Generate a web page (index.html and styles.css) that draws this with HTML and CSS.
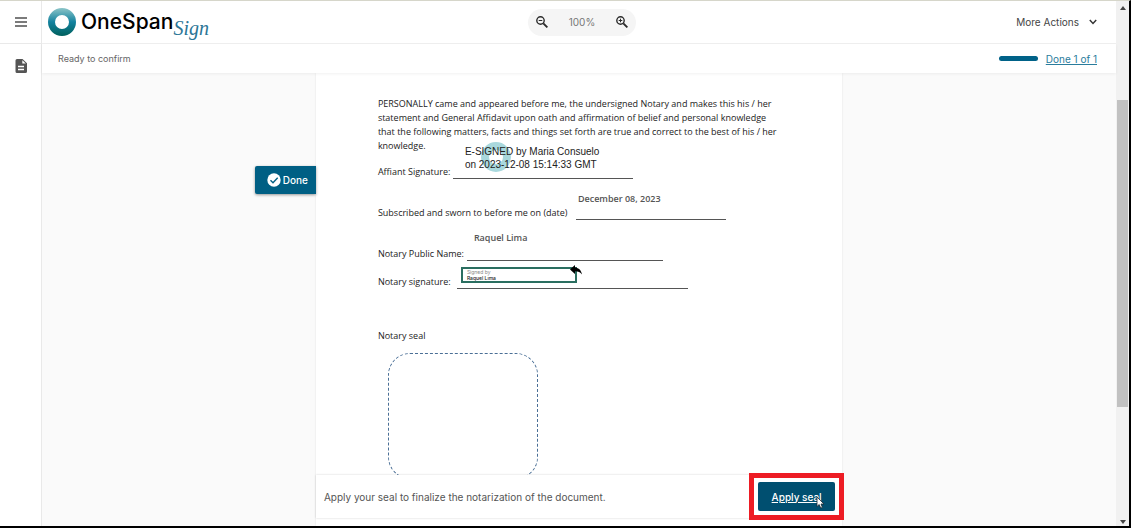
FILE: index.html
```html
<!DOCTYPE html>
<html lang="en">
<head>
<meta charset="utf-8">
<title>OneSpan Sign</title>
<link rel="stylesheet" href="styles.css">
</head>
<body>
<div class="screen">
  <nav class="rail">
    <button class="icon-button rail-menu" aria-label="Menu">
      <svg width="14" height="12" viewBox="0 0 14 12"><path d="M1 2h12M1 6h12M1 10h12" stroke="#505050" stroke-width="1.4"/></svg>
    </button>
    <button class="icon-button rail-doc" aria-label="Documents">
      <svg width="12" height="14" viewBox="0 0 12 14"><path d="M2 0h5.500L12 4.300V12.500a1.500 1.500 0 0 1-1.500 1.500H2A1.500 1.500 0 0 1 .5 12.500v-11A1.500 1.500 0 0 1 2 0z" fill="#555"/><path d="M7.300 1.200v3.400h3.500z" fill="#fff"/><path d="M3 7.500h6M3 10.500h6" stroke="#fff" stroke-width="1.300"/></svg>
    </button>
  </nav>
  <div class="main">
    <header class="topbar">
      <div class="logo">
        <svg width="28" height="28" viewBox="0 0 28 28">
          <defs><linearGradient id="ring" gradientUnits="userSpaceOnUse" x1="14" y1="0" x2="14" y2="28"><stop offset="0" stop-color="#8cc5c8"/><stop offset=".5" stop-color="#13829f"/><stop offset="1" stop-color="#00605c"/></linearGradient></defs>
          <circle cx="14" cy="14" r="10.500" fill="none" stroke="url(#ring)" stroke-width="7"/>
        </svg>
        <span class="logo-name">OneSpan</span><span class="logo-sign">Sign</span>
      </div>
      <div class="zoom">
        <button class="icon-button" aria-label="Zoom out">
          <svg width="12" height="12" viewBox="0 0 12 12" fill="none" stroke="#2c2c2c"><circle cx="4.500" cy="4.500" r="3.700" stroke-width="1.400"/><path d="M7.300 7.300l4.100 4.100" stroke-width="1.900"/><path d="M2.700 4.500h3.600"/></svg>
        </button>
        <span>100%</span>
        <button class="icon-button" aria-label="Zoom in">
          <svg width="12" height="12" viewBox="0 0 12 12" fill="none" stroke="#2c2c2c"><circle cx="4.500" cy="4.500" r="3.700" stroke-width="1.400"/><path d="M7.300 7.300l4.100 4.100" stroke-width="1.900"/><path d="M2.700 4.500h3.600M4.500 2.700v3.600"/></svg>
        </button>
      </div>
      <button class="more">More Actions
        <svg width="8" height="6" viewBox="0 0 8 6"><path d="M.8 1L4 4.400 7.200 1" fill="none" stroke="#333" stroke-width="1.500"/></svg>
      </button>
    </header>
    <div class="status">
      <span>Ready to confirm</span>
      <div class="status-progress">
        <span class="bar"></span>
        <a href="#">Done 1 of 1</a>
      </div>
    </div>
    <div class="workspace">
      <div class="column">
        <div class="page">
          <button class="done">
            <svg width="14" height="14" viewBox="0 0 14 14"><circle cx="7" cy="7" r="6.700" fill="#fff"/><path d="M3.500 7.200l2.500 2.500 4.700-5" fill="none" stroke="#005f84" stroke-width="1.400"/></svg>
            Done
          </button>
          <p class="statement">PERSONALLY came and appeared before me, the undersigned Notary and makes this his / her<br>statement and General Affidavit upon oath and affirmation of belief and personal knowledge<br>that the following matters, facts and things set forth are true and correct to the best of his / her<br>knowledge.</p>
          <div class="line affiant"><span>Affiant Signature:</span><i class="rule"></i></div>
          <div class="line sworn"><span>Subscribed and sworn to before me on (date)</span><i class="rule"></i></div>
          <div class="line notary"><span>Notary Public Name:</span><i class="rule"></i></div>
          <div class="line signature"><span>Notary signature:</span><i class="rule"></i></div>
          <p class="seal-label">Notary seal</p>
          <div class="seal"></div>

          <div class="esign"><span class="esign-ring"></span><span class="esign-text">E-SIGNED by Maria Consuelo<br>on 2023-12-08 15:14:33 GMT</span></div>
          <span class="field field-date">December 08, 2023</span>
          <span class="field field-name">Raquel Lima</span>
          <div class="signed">
            <span class="signed-by">Signed by</span>
            <span class="signed-name">Raquel Lima</span>
            <svg class="undo" width="12" height="10" viewBox="0 0 12 10"><path d="M5 0v2.600c4 .4 6.200 2.900 7 6.900-1.600-2.300-3.800-3.200-7-3.200V9L0 4.400z" fill="#000"/></svg>
          </div>
        </div>
        <footer class="action">
          <span>Apply your seal to finalize the notarization of the document.</span>
          <div class="highlight">
            <button class="apply">Apply seal</button>
            <svg class="cursor" width="9" height="13" viewBox="0 0 9 13"><path d="M1 1v9.500l2.200-2 1.500 3.600 1.700-.7L5 8h3z" fill="#fff" stroke="#1a2a33" stroke-width=".8"/></svg>
          </div>
        </footer>
      </div>
    </div>
  </div>
  <div class="scrollbar">
    <svg width="6" height="4" viewBox="0 0 6 4"><path d="M0 4l3-4 3 4z" fill="#444"/></svg>
    <div class="track"><div class="thumb"></div></div>
    <svg width="6" height="4" viewBox="0 0 6 4"><path d="M0 0l3 4 3-4z" fill="#444"/></svg>
  </div>
</div>
</body>
</html>
```
FILE: styles.css
```css
* { box-sizing: border-box; }

body {
  margin: 0;
  font-family: Inter, "Open Sans", sans-serif;
  font-size: 10px;
  color: #444;
}

button {
  font: inherit;
  color: inherit;
  border: 0;
  padding: 0;
  background: none;
}

svg { display: block; flex: none; }

p { margin: 0; }

.screen {
  display: flex;
  height: 100vh;
  background: #fff;
  border-top: 1px solid #d6d6ca;
  border-right: 2px solid #000;
  border-bottom: 2px solid #000;
}

.icon-button {
  display: flex;
  align-items: center;
  justify-content: center;
}

.rail {
  width: 42px;
  flex: none;
  border-right: 1px solid #e9e9e9;
}

.rail-menu {
  width: 100%;
  height: 43px;
  border-bottom: 1px solid #e9e9e9;
}

.rail-doc { width: 100%; height: 43px; }

.main {
  flex: 1;
  min-width: 0;
  display: flex;
  flex-direction: column;
}

.topbar {
  height: 43px;
  flex: none;
  display: grid;
  grid-template-columns: 1fr auto 1fr;
  align-items: center;
  padding-left: 6px;
  border-bottom: 1px solid #f0f0f0;
}

.logo { display: flex; align-items: center; }

.logo-name {
  margin-left: 5px;
  font-family: Inter, sans-serif;
  font-size: 21px;
  line-height: 28px;
  font-weight: 500;
  color: #000;
}

.logo-sign {
  padding-top: 12px;
  font-family: "Liberation Serif", cursive;
  font-style: italic;
  font-size: 20px;
  line-height: 20px;
  color: #2a7596;
}

.zoom {
  display: flex;
  align-items: center;
  justify-content: space-between;
  width: 108px;
  height: 27px;
  padding: 0 8px;
  border-radius: 14px;
  background: #f5f5f5;
  color: #777;
}

.more {
  justify-self: end;
  display: flex;
  align-items: center;
  gap: 10px;
  margin-right: 19px;
}

.status {
  position: relative;
  z-index: 1;
  height: 29px;
  flex: none;
  display: flex;
  align-items: center;
  justify-content: space-between;
  padding: 0 19px 0 16px;
  background: #fff;
  box-shadow: 0 1px 3px rgba(0, 0, 0, 0.06);
  font-size: 9px;
  color: #666;
}

.status-progress { display: flex; align-items: center; gap: 8px; font-size: 10px; }

.status-progress a { color: #2a7c9c; }

.bar { width: 39px; height: 5px; border-radius: 3px; background: #006288; }

.workspace {
  flex: 1;
  min-height: 0;
  display: flex;
  justify-content: center;
  background: #fafafa;
}

.column {
  width: 49%;
  min-width: 526px;
  display: flex;
  flex-direction: column;
  background: #fff;
  box-shadow: 0 0 2px rgba(0, 0, 0, 0.1);
}

.page {
  position: relative;
  flex: 1;
  min-height: 0;
  padding: 24px 40px 0 62px;
  clip-path: inset(0 0 0 -80px);
  font-family: "Open Sans", "Noto Sans", sans-serif;
  font-size: 9px;
  line-height: 14px;
  color: #222;
}

.statement { white-space: nowrap; }

.line {
  display: flex;
  align-items: flex-end;
  white-space: nowrap;
}

.rule { height: 1px; background: #555; }

.affiant { margin-top: 12px; gap: 3px; }
.affiant .rule { width: 180px; }
.sworn { margin-top: 27px; gap: 9px; }
.sworn .rule { width: 150px; }
.notary { margin-top: 27px; gap: 3px; }
.notary .rule { width: 196px; }
.signature { margin-top: 14px; gap: 6px; }
.signature .rule { width: 231px; }

.seal-label { margin-top: 40px; }

.seal {
  width: 150px;
  height: 126px;
  margin: 10px 0 0 10px;
  border: 1px dashed #4a6f96;
  border-radius: 22px;
}

.done {
  position: absolute;
  top: 93px;
  left: -61px;
  display: flex;
  align-items: center;
  justify-content: center;
  gap: 2px;
  width: 61px;
  height: 28px;
  padding-left: 4px;
  border-radius: 2px 0 0 2px;
  background: #005f84;
  box-shadow: 0 1px 3px rgba(0, 0, 0, 0.4);
  font-family: Inter, sans-serif;
  font-size: 10px;
  font-weight: 500;
  color: #fff;
}

.esign {
  position: absolute;
  top: 72px;
  left: 149px;
  font-family: "Liberation Sans", Arial, sans-serif;
  font-size: 10px;
  line-height: 13px;
  white-space: nowrap;
}

.esign-text { position: relative; }

.esign-ring {
  position: absolute;
  top: -3px;
  left: 16px;
  width: 30px;
  height: 30px;
  border: 8px solid #a9d8dd;
  border-radius: 50%;
}

.field {
  position: absolute;
  font-family: "Open Sans", sans-serif;
  font-size: 9px;
  font-weight: 600;
  color: #555;
  white-space: nowrap;
}

.field-date { top: 119px; left: 262px; }
.field-name { top: 158px; left: 158px; }

.signed {
  position: absolute;
  top: 194px;
  left: 145px;
  display: flex;
  flex-direction: column;
  width: 116px;
  height: 16px;
  padding-left: 4px;
  border: 2px solid #2a6e60;
  background: #fff;
  font-family: Inter, sans-serif;
  font-size: 5px;
  line-height: 6px;
}

.signed-by { color: #888; }
.signed-name { color: #222; font-weight: 500; }

.undo { position: absolute; top: -4px; right: -7px; }

.action {
  position: relative;
  flex: none;
  display: flex;
  align-items: center;
  justify-content: space-between;
  height: 43px;
  margin-bottom: 8px;
  padding-left: 8px;
  background: #fff;
  box-shadow: 0 0 2px rgba(0, 0, 0, 0.18);
  color: #555;
}

.highlight {
  position: relative;
  flex: none;
  margin-right: -2px;
  padding: 4px;
  border: 5px solid #ed1c24;
}

.apply {
  display: block;
  width: 77px;
  height: 29px;
  border-radius: 2px;
  background: #004f70;
  color: #fff;
  font-weight: 500;
  text-decoration: underline;
}

.cursor { position: absolute; right: 14px; bottom: 6px; }

.scrollbar {
  width: 13px;
  flex: none;
  display: flex;
  flex-direction: column;
  align-items: center;
  padding: 5px 1px 2px;
  background: #f1f1f1;
}

.track { flex: 1; width: 100%; padding-top: 90px; }

.thumb { height: 73%; background: #c1c1c1; }
```
